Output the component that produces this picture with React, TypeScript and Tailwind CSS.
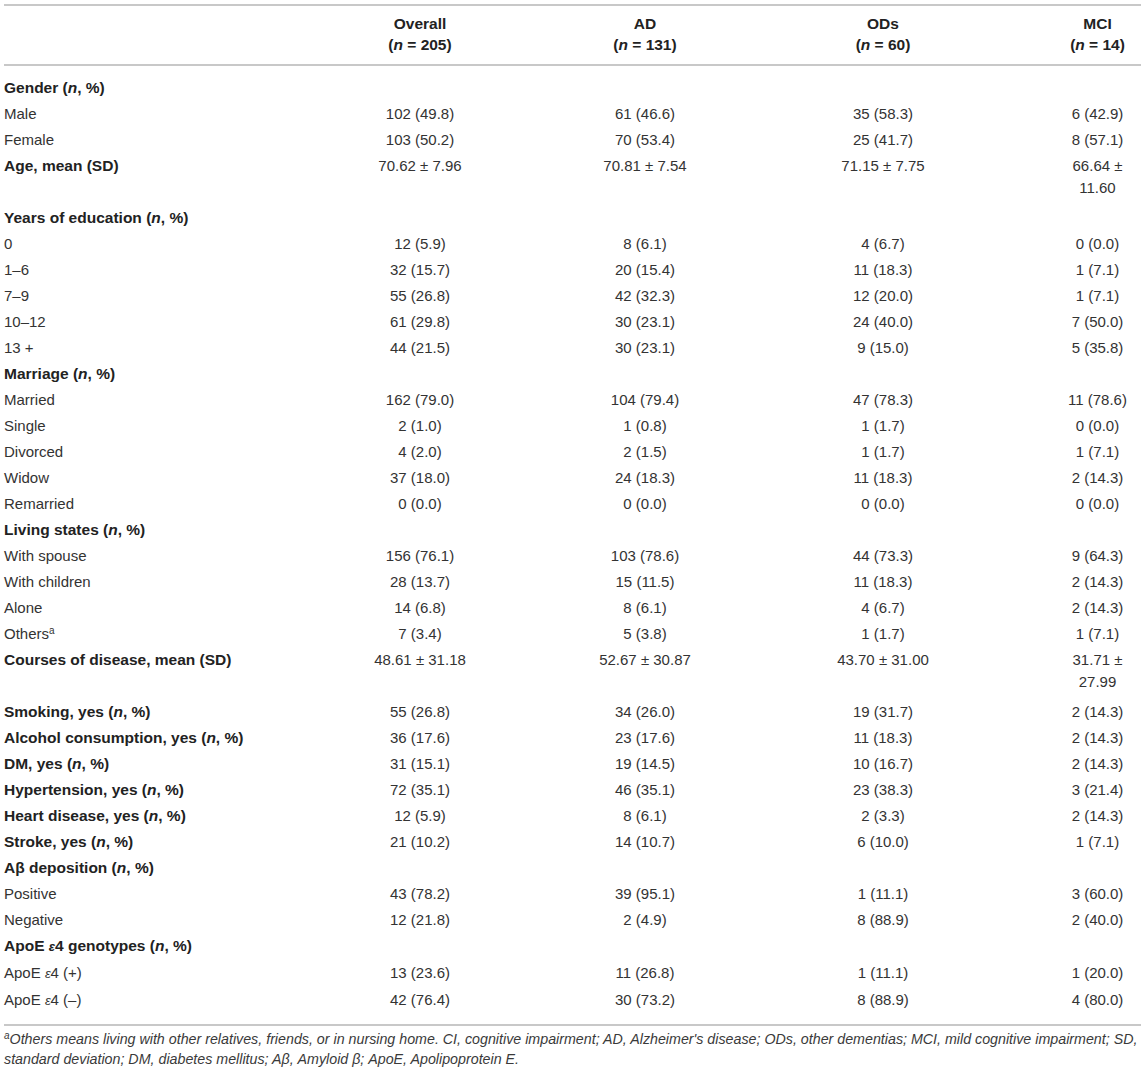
import React from 'react';

type Row = {
  label: React.ReactNode;
  values?: React.ReactNode[];
  bold?: boolean;
  tall?: boolean;
};

const N = () => <i>n</i>;
const Eps = () => <i className="text-[13px]">ε</i>;

const rows: Row[] = [
  { label: <>Gender (<N />, %)</>, bold: true },
  { label: 'Male', values: ['102 (49.8)', '61 (46.6)', '35 (58.3)', '6 (42.9)'] },
  { label: 'Female', values: ['103 (50.2)', '70 (53.4)', '25 (41.7)', '8 (57.1)'] },
  {
    label: 'Age, mean (SD)',
    bold: true,
    tall: true,
    values: ['70.62 ± 7.96', '70.81 ± 7.54', '71.15 ± 7.75', '66.64 ± 11.60'],
  },
  { label: <>Years of education (<N />, %)</>, bold: true },
  { label: '0', values: ['12 (5.9)', '8 (6.1)', '4 (6.7)', '0 (0.0)'] },
  { label: '1–6', values: ['32 (15.7)', '20 (15.4)', '11 (18.3)', '1 (7.1)'] },
  { label: '7–9', values: ['55 (26.8)', '42 (32.3)', '12 (20.0)', '1 (7.1)'] },
  { label: '10–12', values: ['61 (29.8)', '30 (23.1)', '24 (40.0)', '7 (50.0)'] },
  { label: '13 +', values: ['44 (21.5)', '30 (23.1)', '9 (15.0)', '5 (35.8)'] },
  { label: <>Marriage (<N />, %)</>, bold: true },
  { label: 'Married', values: ['162 (79.0)', '104 (79.4)', '47 (78.3)', '11 (78.6)'] },
  { label: 'Single', values: ['2 (1.0)', '1 (0.8)', '1 (1.7)', '0 (0.0)'] },
  { label: 'Divorced', values: ['4 (2.0)', '2 (1.5)', '1 (1.7)', '1 (7.1)'] },
  { label: 'Widow', values: ['37 (18.0)', '24 (18.3)', '11 (18.3)', '2 (14.3)'] },
  { label: 'Remarried', values: ['0 (0.0)', '0 (0.0)', '0 (0.0)', '0 (0.0)'] },
  { label: <>Living states (<N />, %)</>, bold: true },
  { label: 'With spouse', values: ['156 (76.1)', '103 (78.6)', '44 (73.3)', '9 (64.3)'] },
  { label: 'With children', values: ['28 (13.7)', '15 (11.5)', '11 (18.3)', '2 (14.3)'] },
  { label: 'Alone', values: ['14 (6.8)', '8 (6.1)', '4 (6.7)', '2 (14.3)'] },
  {
    label: (
      <>
        Others<sup className="text-[10px]">a</sup>
      </>
    ),
    values: ['7 (3.4)', '5 (3.8)', '1 (1.7)', '1 (7.1)'],
  },
  {
    label: 'Courses of disease, mean (SD)',
    bold: true,
    tall: true,
    values: ['48.61 ± 31.18', '52.67 ± 30.87', '43.70 ± 31.00', '31.71 ± 27.99'],
  },
  { label: <>Smoking, yes (<N />, %)</>, bold: true, values: ['55 (26.8)', '34 (26.0)', '19 (31.7)', '2 (14.3)'] },
  {
    label: <>Alcohol consumption, yes (<N />, %)</>,
    bold: true,
    values: ['36 (17.6)', '23 (17.6)', '11 (18.3)', '2 (14.3)'],
  },
  { label: <>DM, yes (<N />, %)</>, bold: true, values: ['31 (15.1)', '19 (14.5)', '10 (16.7)', '2 (14.3)'] },
  {
    label: <>Hypertension, yes (<N />, %)</>,
    bold: true,
    values: ['72 (35.1)', '46 (35.1)', '23 (38.3)', '3 (21.4)'],
  },
  { label: <>Heart disease, yes (<N />, %)</>, bold: true, values: ['12 (5.9)', '8 (6.1)', '2 (3.3)', '2 (14.3)'] },
  { label: <>Stroke, yes (<N />, %)</>, bold: true, values: ['21 (10.2)', '14 (10.7)', '6 (10.0)', '1 (7.1)'] },
  { label: <>Aβ deposition (<N />, %)</>, bold: true },
  { label: 'Positive', values: ['43 (78.2)', '39 (95.1)', '1 (11.1)', '3 (60.0)'] },
  { label: 'Negative', values: ['12 (21.8)', '2 (4.9)', '8 (88.9)', '2 (40.0)'] },
  {
    label: (
      <>
        ApoE <Eps />4 genotypes (<N />, %)
      </>
    ),
    bold: true,
  },
  {
    label: (
      <>
        ApoE <Eps />4 (+)
      </>
    ),
    values: ['13 (23.6)', '11 (26.8)', '1 (11.1)', '1 (20.0)'],
  },
  {
    label: (
      <>
        ApoE <Eps />4 (–)
      </>
    ),
    values: ['42 (76.4)', '30 (73.2)', '8 (88.9)', '4 (80.0)'],
  },
];

const headers = [
  { name: 'Overall', n: '205' },
  { name: 'AD', n: '131' },
  { name: 'ODs', n: '60' },
  { name: 'MCI', n: '14' },
];

const dataCell = ['px-[4px]', 'px-[4px]', 'px-[4px]', 'pl-[60px] pr-[2px]'];

export default function App() {
  return (
    <div className="w-[1145px] bg-white px-[4px] pt-[4px] pb-[6px] font-['Liberation_Sans',Arial,sans-serif] text-[15px] text-[#333]">
      <table className="w-[1137px] table-fixed border-collapse">
        <colgroup>
          <col className="w-[316px]" />
          <col className="w-[200px]" />
          <col className="w-[250px]" />
          <col className="w-[226px]" />
          <col className="w-[145px]" />
        </colgroup>
        <thead>
          <tr className="border-y-2 border-[#c8c8c8]">
            <th className="pt-[7px] pb-[9px]"></th>
            {headers.map((h, i) => (
              <th
                key={h.name}
                className={`pt-[7px] pb-[9px] text-center align-top text-[15.5px] font-bold leading-[21px] text-[#222] ${dataCell[i]}`}
              >
                {h.name}
                <br />
                (<i>n</i> = {h.n})
              </th>
            ))}
          </tr>
        </thead>
        <tbody>
          {rows.map((r, idx) => {
            const first = idx === 0;
            const last = idx === rows.length - 1;
            const pad = `${first ? 'pt-[11px]' : 'pt-[2px]'} ${r.tall ? 'pb-[6px]' : last ? 'pb-[12px]' : 'pb-[2px]'}`;
            return (
              <tr key={idx} className={last ? 'border-b-2 border-[#c8c8c8]' : ''}>
                <td
                  className={`${pad} pr-[4px] text-left align-top leading-[22px] ${
                    r.bold ? 'text-[15.5px] font-bold text-[#222]' : ''
                  }`}
                >
                  {r.label}
                </td>
                {[0, 1, 2, 3].map((c) => (
                  <td key={c} className={`${pad} ${dataCell[c]} text-center align-top leading-[22px]`}>
                    {r.values ? r.values[c] : ''}
                  </td>
                ))}
              </tr>
            );
          })}
        </tbody>
      </table>
      <div className="mt-[3px] text-[14.25px] italic leading-[20px] text-[#3a3a3a]">
        <div className="whitespace-nowrap">
          <sup className="text-[10px]">a</sup>Others means living with other relatives, friends, or in nursing home. CI,
          cognitive impairment; AD, Alzheimer's disease; ODs, other dementias; MCI, mild cognitive impairment; SD,
        </div>
        <div className="whitespace-nowrap">
          standard deviation; DM, diabetes mellitus; Aβ, Amyloid β; ApoE, Apolipoprotein E.
        </div>
      </div>
    </div>
  );
}
